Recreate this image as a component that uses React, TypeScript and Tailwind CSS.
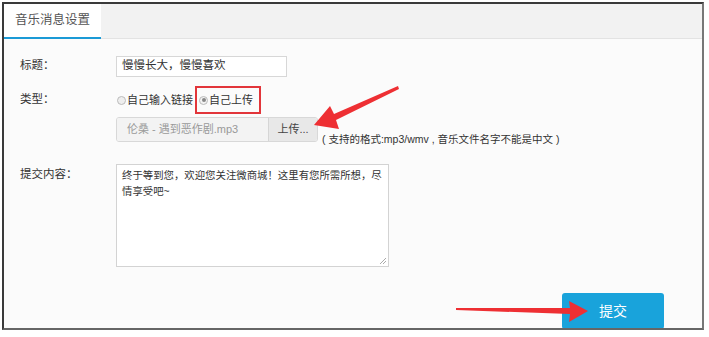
import React from "react";

const font = { fontFamily: '"Liberation Sans", "Noto Sans CJK SC", sans-serif' };

const App: React.FC = () => {
  return (
    <div className="w-[709px] h-[337px] bg-white pl-[2px] pt-[2px] text-[12px] text-[#333]" style={font}>
      <div className="relative w-[702px] h-[328px] border-2 border-[#3a3a3a] border-r-[#777] border-b-[#666] bg-[#fbfbfb] overflow-hidden">
        {/* Tab header */}
        <div className="flex h-[35px] bg-[#f2f2f2] border-b border-[#e3e3e3]">
          <div className="w-[97px] bg-white border-b-2 border-[#1b9ad6] flex items-center justify-center text-[12.5px] text-[#555] -mb-px">
            音乐消息设置
          </div>
        </div>

        {/* Form */}
        <div className="pl-[16px] pt-[16px]">
          <div className="flex items-center h-[22px]">
            <div className="w-[96px] text-[11.5px]">标题：</div>
            <div className="w-[171px] h-[21px] border border-[#d7d7d7] bg-white px-[5px] flex items-center text-[11.5px]">
              慢慢长大，慢慢喜欢
            </div>
          </div>

          <div className="flex items-center h-[26px] mt-[10px]">
            <div className="w-[97px] text-[11.5px]">类型：</div>
            <label className="flex items-center text-[11px]">
              <span className="w-[9px] h-[9px] rounded-full border border-[#bbb] bg-[#eee] mr-[1px]" />
              自己输入链接
            </label>
            <div className="ml-[2px] h-[28px] w-[66px] border-2 border-[#e2353a] flex items-center pl-[2px] text-[11px]">
              <span className="w-[9px] h-[9px] rounded-full border border-[#bbb] bg-[#f3f3f3] mr-[1px] flex items-center justify-center">
                <span className="w-[4px] h-[4px] rounded-full bg-[#888]" />
              </span>
              自己上传
            </div>
          </div>

          <div className="flex items-end ml-[96px] mt-[4px]">
            <div className="flex h-[25px] w-[202px] border border-[#d8d8d8] rounded-[3px] overflow-hidden">
              <div className="flex-1 bg-[#f3f3f3] flex items-center pl-[10px] text-[11px] text-[#999]">
                伦桑 - 遇到恶作剧.mp3
              </div>
              <div className="w-[49px] bg-[#e8e8e8] border-l border-[#d5d5d5] flex items-center justify-center text-[11px] text-[#444]">
                上传...
              </div>
            </div>
            <div className="ml-[4px] text-[10.5px] text-[#333] -mb-[6px] whitespace-pre">
              {"( 支持的格式:mp3/wmv , 音乐文件名字不能是中文 )"}
            </div>
          </div>

          <div className="flex mt-[22px]">
            <div className="w-[96px] text-[11.5px] pt-[2px]">提交内容：</div>
            <div className="w-[273px] h-[103px] border border-[#d3d3d3] bg-white pl-[5px] pr-[4px] pt-[3px] text-[10.4px] leading-[16px] relative">
              终于等到您，欢迎您关注微商城！这里有您所需所想，尽情享受吧~
              <svg className="absolute right-[2px] bottom-[2px]" width="7" height="7" viewBox="0 0 7 7">
                <path d="M1 7 L7 1 M4 7 L7 4" stroke="#aaa" strokeWidth="1" />
              </svg>
            </div>
          </div>
        </div>

        {/* Submit */}
        <div className="flex justify-end pr-[38px] mt-[26px]">
          <button className="w-[102px] h-[36px] bg-[#19a3db] rounded-[3px] text-white text-[14px]">提交</button>
        </div>

        {/* Arrows */}
        <svg className="absolute left-0 top-0 pointer-events-none" width="702" height="328" viewBox="0 0 702 328">
          <path d="M394 82 L330 110 L326 102 L310 121 L335 125 L332 116 L395 85 Z" fill="#ee2f33" />
          <path d="M452 304 L566 304 L565 297 L584 307 L565 318 L566 310 L452 306 Z" fill="#ee2f33" />
        </svg>
      </div>
    </div>
  );
};

export default App;
